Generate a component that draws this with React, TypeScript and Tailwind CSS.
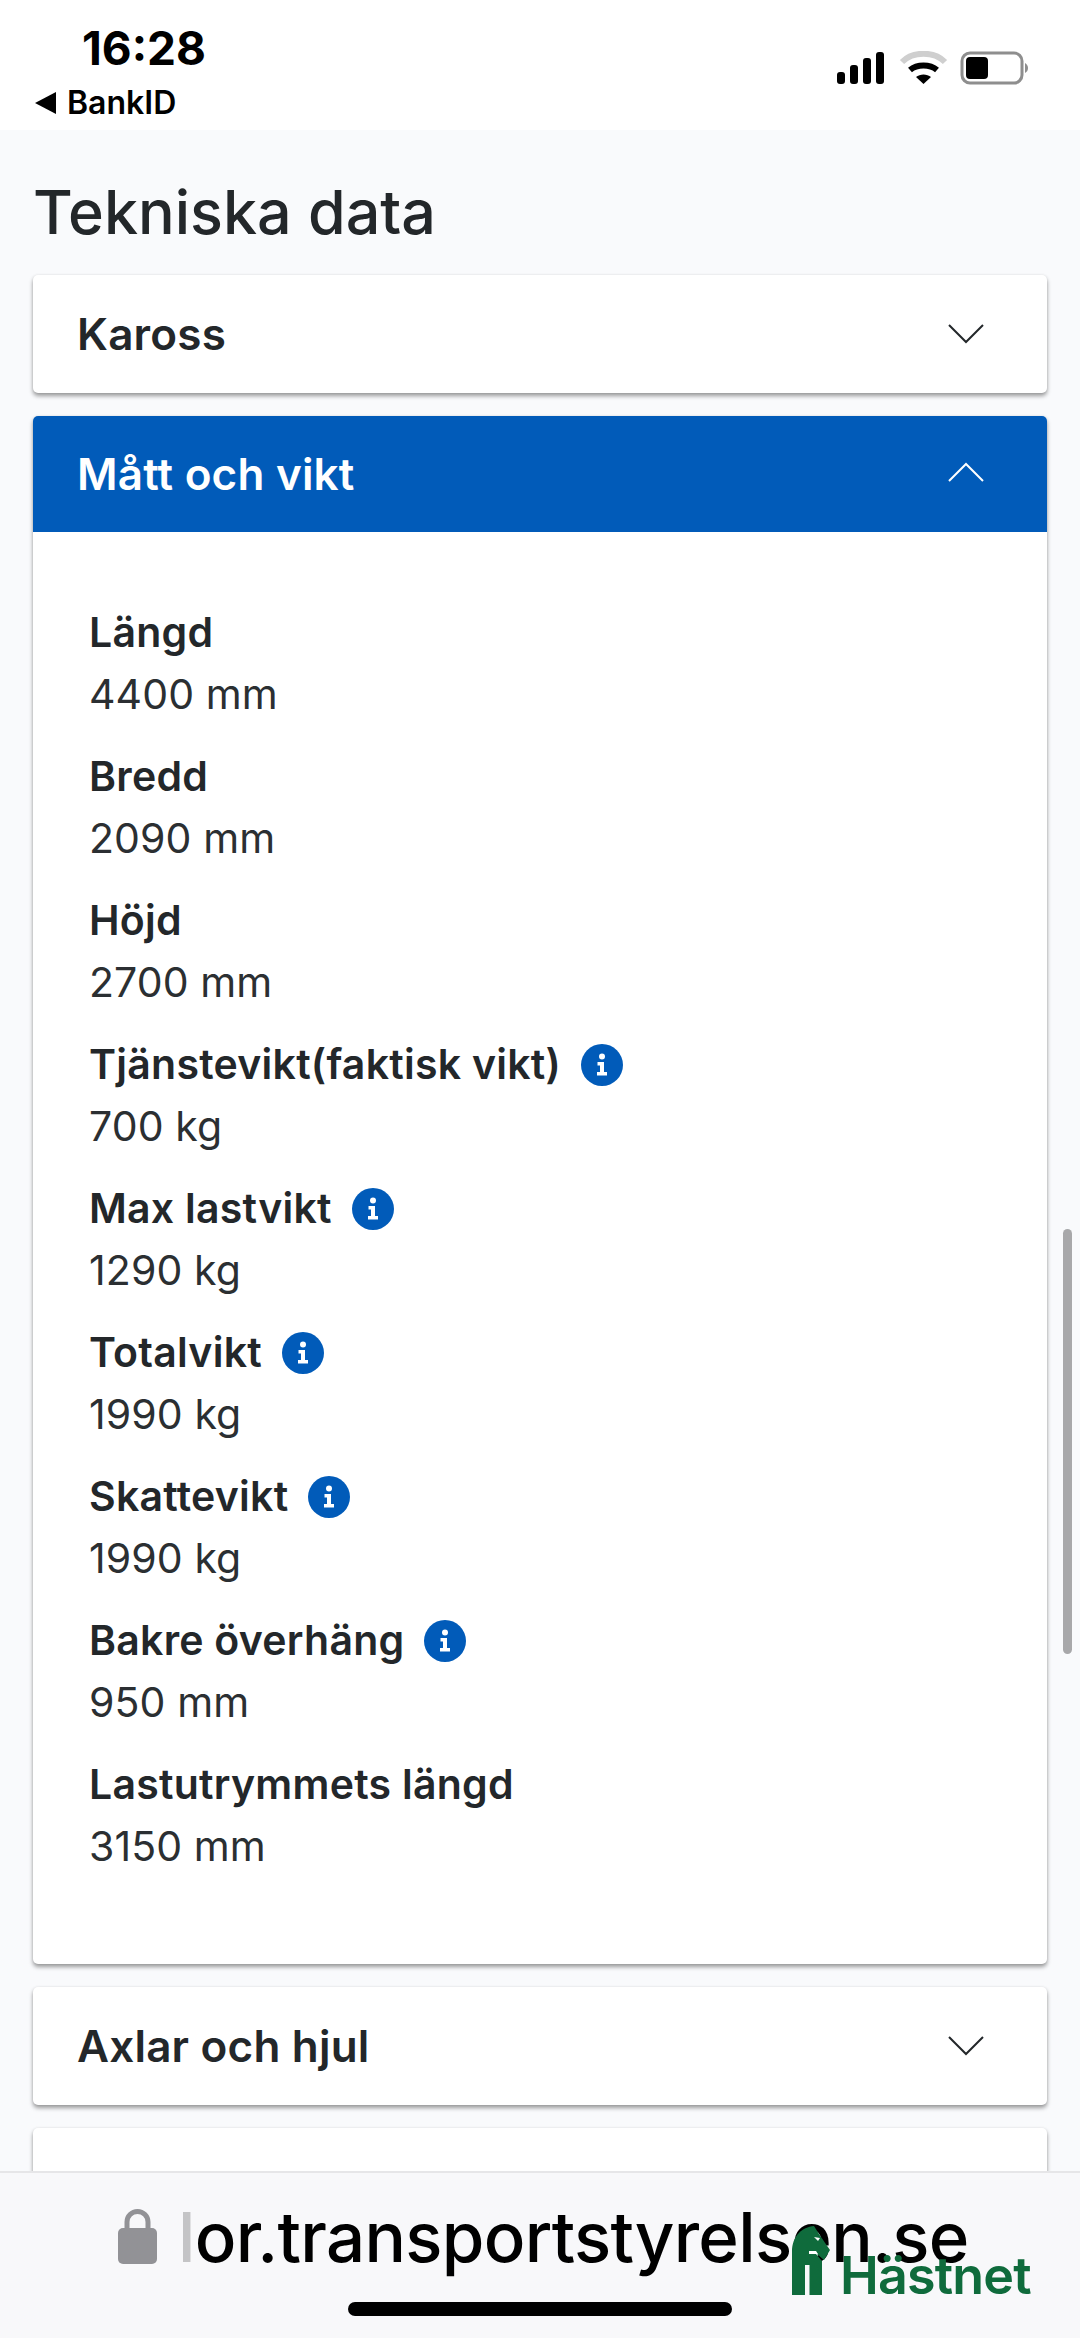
const sans = { fontFamily: 'Inter, "Noto Sans", sans-serif' };

const rows: [string, string, boolean][] = [
  ["Längd", "4400 mm", false],
  ["Bredd", "2090 mm", false],
  ["Höjd", "2700 mm", false],
  ["Tjänstevikt(faktisk vikt)", "700 kg", true],
  ["Max lastvikt", "1290 kg", true],
  ["Totalvikt", "1990 kg", true],
  ["Skattevikt", "1990 kg", true],
  ["Bakre överhäng", "950 mm", true],
  ["Lastutrymmets längd", "3150 mm", false],
];

function Chevron({ up = false, color = "#23272a" }: { up?: boolean; color?: string }) {
  return (
    <svg width="36" height="20" viewBox="0 0 36 20" fill="none" className={up ? "-mt-[4px]" : ""}>
      <path d={up ? "M1 19 L18 2 L35 19" : "M1 1 L18 18 L35 1"} stroke={color} strokeWidth="2" />
    </svg>
  );
}

function Info() {
  return (
    <svg width="42" height="42" viewBox="0 0 42 42" className="shrink-0">
      <circle cx="21" cy="21" r="21" fill="#015bb9" />
      <circle cx="21" cy="12.5" r="3" fill="#fff" />
      <path d="M16.5 18h6.5v10h3v3.5h-10V28h3v-6.500h-2.500z" fill="#fff" />
    </svg>
  );
}

function Collapsed({ title }: { title: string }) {
  return (
    <div className="h-[118px] bg-white rounded-[5px] shadow-[0_3px_4px_rgba(0,0,0,0.38),0_0_3px_rgba(0,0,0,0.08)] flex items-center justify-between pl-[44px] pr-[63px]">
      <span className="text-[44px] font-semibold text-[#23272a] tracking-[0.2px]">{title}</span>
      <Chevron />
    </div>
  );
}

export default function App() {
  return (
    <div className="relative w-[1080px] h-[2338px] overflow-hidden bg-[#f9fafc] flex flex-col" style={sans}>
      <header className="h-[130px] shrink-0 bg-white flex justify-between">
        <div className="pl-[35px] pt-[22px]">
          <div className="pl-[47px] text-[46px] leading-[52px] font-bold text-black">16:28</div>
          <div className="flex items-center gap-[11px] mt-[12px]">
            <svg width="21" height="24" viewBox="0 0 21 24"><path d="M21 1v22L0 12z" fill="#000" /></svg>
            <span className="text-[32px] leading-[34px] font-semibold text-black">BankID</span>
          </div>
        </div>
        <div className="pt-[51px] pr-[50px]">
          <svg width="193" height="36" viewBox="0 0 193 36" fill="none">
            <rect x="0" y="21" width="8" height="12" rx="3" fill="#000" />
            <rect x="13" y="14" width="8" height="19" rx="3" fill="#000" />
            <rect x="26" y="7" width="8" height="26" rx="3" fill="#000" />
            <rect x="39" y="1" width="8" height="32" rx="3" fill="#000" />
            <path d="M65 11 C76 0 97 0 108 11" stroke="#cfcfcf" strokeWidth="6" />
            <path d="M73 19 C80 13 93 13 100 19" stroke="#000" strokeWidth="6" />
            <path d="M79 26 L86.5 33 L94 26 C90 22.500 83 22.500 79 26Z" fill="#000" />
            <rect x="125" y="2" width="60" height="30" rx="8" stroke="#8e8e8e" strokeWidth="3" />
            <rect x="129" y="6" width="22" height="22" rx="4" fill="#000" />
            <path d="M188 12 C192 14 192 20 188 22Z" fill="#8e8e8e" />
          </svg>
        </div>
      </header>

      <main className="px-[33px] flex-1">
        <h1 className="text-[61px] leading-[72px] font-medium text-[#23272a] mt-[46px] mb-[27px]">Tekniska data</h1>
        <div className="flex flex-col gap-[23px]">
          <Collapsed title="Kaross" />
          <section className="bg-white rounded-[5px] shadow-[0_3px_4px_rgba(0,0,0,0.38),0_0_3px_rgba(0,0,0,0.08)] overflow-hidden">
            <div className="h-[116px] bg-[#015bb9] flex items-center justify-between pl-[44px] pr-[63px]">
              <span className="text-[44px] font-semibold text-white tracking-[0.2px]">Mått och vikt</span>
              <Chevron up color="#ffffff" />
            </div>
            <div className="pl-[56px] pt-[70px] pb-[86px] flex flex-col gap-[20px]">
              {rows.map(([label, value, info]) => (
                <div key={label}>
                  <div className="flex items-center gap-[20px] h-[62px]">
                    <span className="text-[41px] font-semibold text-[#23272a] tracking-[0.25px]">{label}</span>
                    {info && <Info />}
                  </div>
                  <div className="h-[62px] flex items-center text-[41px] font-normal text-[#2b2f32] tracking-[0.1px]">{value}</div>
                </div>
              ))}
            </div>
          </section>
          <Collapsed title="Axlar och hjul" />
          <Collapsed title="" />
        </div>
      </main>

      <div className="absolute left-[1063px] top-[1229px] w-[9px] h-[425px] rounded-full bg-[#a8a8aa]" />

      <footer className="absolute left-0 right-0 bottom-0 h-[167px] bg-[#f8f8fa] border-t-2 border-[#e6e6e8]">
        <div className="flex items-start pl-[118px] pt-[35px] gap-[21px]">
          <svg width="39" height="56" viewBox="0 0 39 56" fill="none">
            <path d="M9 24V14a10.500 10.500 0 0 1 21 0v10" stroke="#929296" strokeWidth="5" />
            <rect x="0" y="20" width="39" height="36" rx="5" fill="#929296" />
          </svg>
          <div className="-mt-[6px] text-[69px] leading-[70px] font-medium text-black tracking-[-0.7px] whitespace-nowrap">
            <span className="text-[#c4c4c6]">l</span>or.transportstyrelsen.se
          </div>
        </div>
      </footer>

      <div className="absolute left-[348px] top-[2302px] w-[384px] h-[14px] rounded-full bg-black" />

      <div className="absolute left-[792px] top-[2226px] flex items-end gap-[10px]">
        <svg width="38" height="69" viewBox="0 0 38 69">
          <path d="M0 69V26C0 10 10 1 22 0c3 5 9 14 16 24l-6 10-7-6h-1l6 7v34H17.500V39h-4.500v30z" fill="#0f6b3c" />
          <path d="M22 11l6 1-2 3z" fill="#fff" />
          <path d="M17 25h7l2 3h-9z" fill="#fff" />
        </svg>
        <span className="text-[52px] leading-[38px] font-semibold text-[#0f6b3c] tracking-[-0.8px]">Hästnet</span>
      </div>
    </div>
  );
}
